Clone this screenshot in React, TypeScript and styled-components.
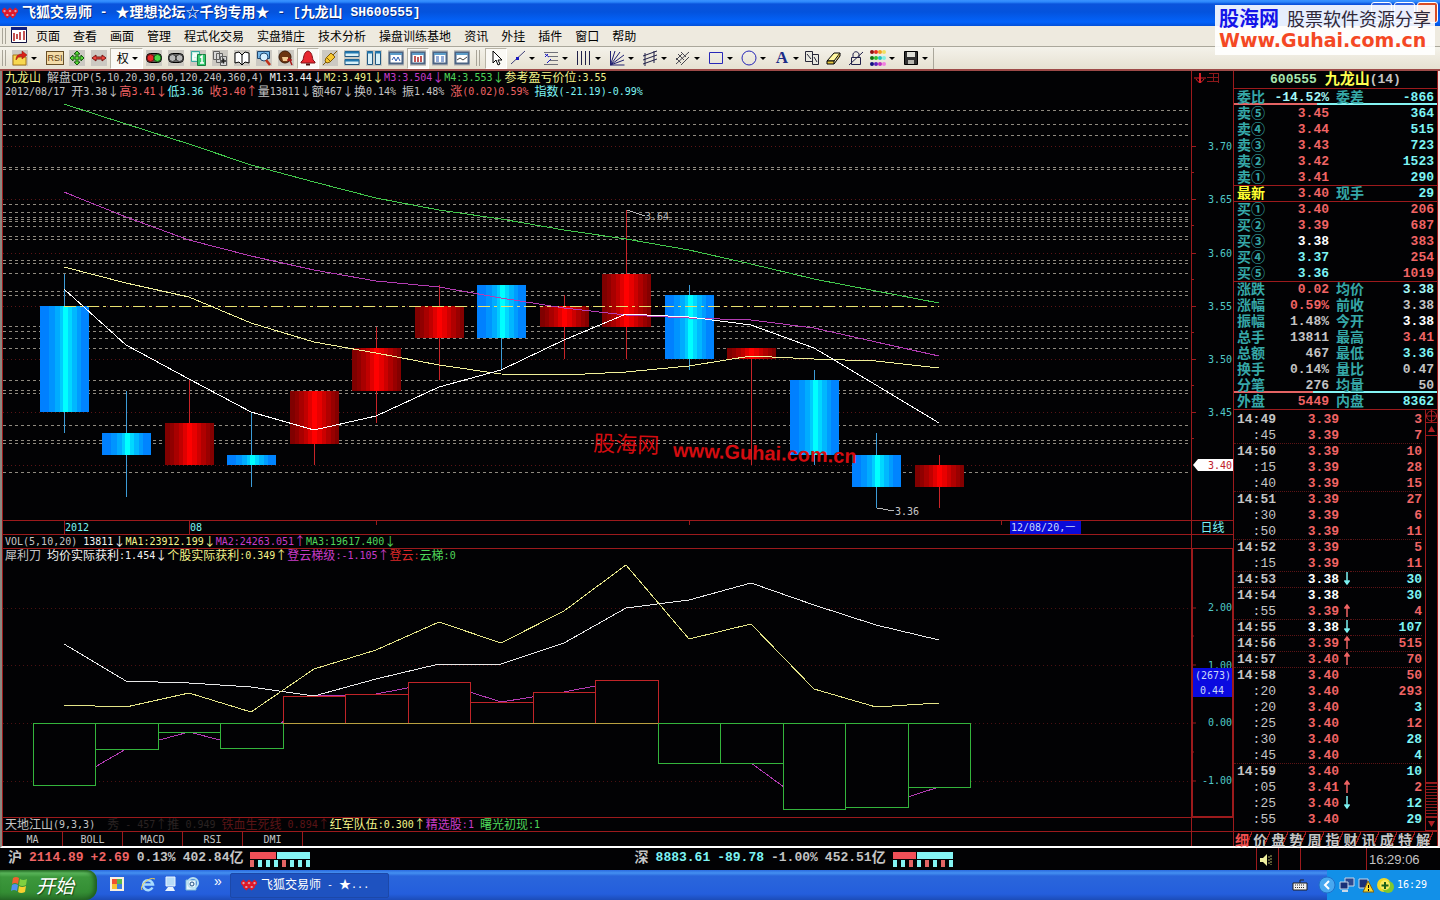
import React from 'react';
import styled, { createGlobalStyle, css } from 'styled-components';

const CJK = '"Noto Sans CJK SC", sans-serif';
const MONO = `"DejaVu Sans Mono", ${CJK}`;
const NUM = `"Liberation Mono", ${CJK}`;
const RED = '#9c1a1c';
const C = {
  up: '#f06464', down: '#7df4f4', flat: '#ffffff', gray: '#c4c4c4', label: '#36a8a8',
  yellow: '#f4f48a', magenta: '#c83cc8', green: '#4fd65a', white: '#f4f4f4',
};

const GlobalStyle = createGlobalStyle`
  * { box-sizing: border-box; }
  body { margin: 0; background: #020204; }
  button { font: inherit; color: inherit; background: none; border: 0; padding: 0; margin: 0; }
`;

/* ---------- text with half-width latin and full-width Chinese ---------- */
const Wide = styled.span<{ $size: number }>`
  font-family: ${CJK};
  font-size: ${p => p.$size}px;
  line-height: 0;
  vertical-align: -1px;
`;
const WIDE_RE = /([\u3400-\u9fff\u2460-\u2473\u2605\u2606\u2190-\u2193]+)/;
const Mixed = ({ children, size = 12 }: { children: string; size?: number }) => (
  <>
    {children.split(WIDE_RE).map((part, i) =>
      i % 2 ? <Wide key={i} $size={size}>{part}</Wide> : part)}
  </>
);

/* ---------- page frame ---------- */
const Page = styled.div`
  min-height: 100vh;
  display: flex;
  flex-direction: column;
  position: relative;
  font: 10px/14px ${MONO};
  color: ${C.gray};
`;

const TitleBar = styled.header`
  height: 26px;
  display: flex;
  align-items: center;
  gap: 4px;
  padding-left: 2px;
  background: linear-gradient(#3a93ff 0, #2b86fb 2px, #0a53dc 4px, #0453dd 12px, #0363fb 22px, #0350d8 26px);
  color: #fff;
`;
const Title = styled.h1`
  margin: 0;
  font: bold 13px/22px ${NUM};
  white-space: pre;
  text-shadow: 1px 1px 0 #0a2c80;
`;

const Menu = styled.nav`
  height: 21px;
  display: flex;
  align-items: center;
  gap: 13px;
  padding-left: 36px;
  position: relative;
  background: #eeeadf;
  border-bottom: 1px solid #aaa79b;
  color: #000;
  font: 12px/18px ${CJK};
`;
const MenuIcon = styled.span`
  position: absolute;
  left: 0;
  top: 1px;
  display: flex;
  align-items: center;
`;

const Toolbar = styled.div`
  height: 24px;
  display: flex;
  align-items: center;
  background: linear-gradient(#f4f2ea, #e6e1d2);
  border-bottom: 2px solid #9d4a48;
  color: #000;
`;
const Grip = styled.span<{ $group?: boolean }>`
  width: 4px;
  height: 16px;
  flex: none;
  border-left: 1px solid #a8a498;
  border-right: 1px solid #a8a498;
  margin: 0 ${p => (p.$group ? 5 : 3)}px 0 ${p => (p.$group ? 3 : 2)}px;
`;
const Tool = styled.button<{ $drop?: boolean; $active?: boolean; $tile?: boolean; $wide?: boolean; $narrow?: boolean }>`
  width: ${p => (p.$wide ? 35 : p.$narrow ? 30 : p.$drop ? 33 : 22)}px;
  height: 21px;
  flex: none;
  display: flex;
  align-items: center;
  justify-content: ${p => (p.$drop ? 'flex-start' : 'center')};
  gap: 3px;
  padding-left: ${p => (p.$drop ? 3 : 0)}px;
  font: 12px/18px ${CJK};
  svg { flex: none; }
  ${p => p.$active && css`
    background: #faf9f5;
    border: 1px solid #b8b4a6;
    border-right-color: #fff;
    border-bottom-color: #fff;
  `}
  ${p => p.$tile && css`
    svg { background: #ccc9c2; }
  `}
`;
const Caret = styled.i`
  border: 3px solid transparent;
  border-top-color: #000;
  border-bottom: 0;
`;
const ToolEnd = styled.span`
  height: 21px;
  border-left: 1px solid #aaa79b;
`;

/* ---------- workspace ---------- */
const Workspace = styled.main`
  flex: 1;
  display: grid;
  grid-template-columns: minmax(0, 1fr) 42px 205px;
  border-left: 2px solid #8c8880;
  border-right: 2px solid #f4dcdc;
  border-bottom: 2px solid #fff;
  background: #020204;
`;
const Rows = styled.div`
  display: grid;
  grid-template-rows: 449px 14px 14px 269px 14px 15px;
  border-left: 1px solid ${RED};
  min-width: 0;
  > * + * { border-top: 1px solid ${RED}; }
`;
const Pane = styled.section`
  display: flex;
  flex-direction: column;
  min-width: 0;
  min-height: 0;
`;
const Canvas = styled.svg`
  display: block;
  width: 100%;
  flex: 1;
  min-height: 0;
  overflow: hidden;
`;
const Info = styled.div`
  height: 14px;
  line-height: 13px;
  padding-left: 2px;
  white-space: pre;
`;
const Ink = styled.span<{ $c: string }>`
  color: ${p => p.$c};
`;
const ChartText = styled.text`
  font: 10px ${MONO};
`;
const Watermark = styled.text<{ $cn?: boolean }>`
  font: ${p => (p.$cn ? '22px' : 'bold 20px')} "Liberation Sans", "Noto Sans CJK SC", sans-serif;
  fill: #d40c10;
`;
const StudyTabs = styled.div`
  display: flex;
  button {
    width: 60px;
    border-right: 1px solid ${RED};
    line-height: 13px;
  }
`;
const AxisName = styled.div`
  color: ${C.down};
  text-align: center;
  line-height: 13px;
`;
const AxisFrame = styled.div`
  display: flex;
  outline: 1px solid ${RED};
  outline-offset: -1px;
`;

type Seg = [string, string];
const InfoLine = ({ segs }: { segs: Seg[] }) => (
  <Info>{segs.map(([t, c], i) => <Ink key={i} $c={c}><Mixed>{t}</Mixed></Ink>)}</Info>
);

/* ---------- chart data ---------- */
const PLOT_X = 3, PLOT_Y = 99, SUB_Y = 563;
const X = Array.from({ length: 15 }, (_, i) => Math.floor(64 + i * 62.5));
const priceY = (p: number) => Math.round(465.4 - (p - 3.4) * 1064);

// open, high, low, close
const CANDLES = [
  [3.55, 3.58, 3.43, 3.45], [3.43, 3.47, 3.37, 3.41], [3.4, 3.48, 3.4, 3.44], [3.41, 3.45, 3.38, 3.4],
  [3.42, 3.47, 3.4, 3.47], [3.47, 3.53, 3.44, 3.51], [3.52, 3.57, 3.48, 3.55], [3.57, 3.57, 3.49, 3.52],
  [3.53, 3.56, 3.5, 3.55], [3.53, 3.64, 3.5, 3.58], [3.56, 3.57, 3.49, 3.5], [3.5, 3.51, 3.4, 3.51],
  [3.48, 3.49, 3.4, 3.41], [3.41, 3.43, 3.36, 3.38], [3.38, 3.41, 3.36, 3.4],
];
const LEVELS = [110, 124, 135, 167, 169, 204, 212, 217, 219, 221, 226, 236, 239, 260, 263, 273, 291, 295,
  326, 331, 338, 348, 380, 390, 393, 425, 440, 443, 472];
const MA: [string, number[]][] = [
  ['#42c84c', [104, 124, 144, 165, 182, 198, 210, 219, 230, 239, 250, 264, 279, 291, 303]],
  ['#b43cb4', [192, 217, 240, 256, 270, 281, 287, 298, 308, 315, 318, 320, 328, 342, 356]],
  ['#f0f09a', [267, 283, 297, 323, 342, 353, 365, 374, 375, 372, 366, 356, 359, 361, 368]],
  ['#ffffff', [289, 345, 379, 412, 430, 416, 387, 370, 340, 314, 317, 325, 348, 385, 423]],
];
const BARS = [785, 749, 732, 748, 696, 694, 682, 702, 692, 680, 763, 763, 809, 807, 787];
const PROFIT_AVG = [644, 681, 683, 687, 696, 679, 664, 664, 643, 608, 600, 583, 605, 625, 640];
const PROFIT_ONE = [705, 707, 693, 712, 669, 650, 622, 643, 611, 565, 639, 624, 689, 707, 703];
const points = (ys: number[]) => ys.map((y, i) => `${X[i]},${y}`).join(' ');

const Stops = ({ list }: { list: [number, string][] }) => (
  <>
    {list.map(([o, c], i) => (
      <React.Fragment key={i}>
        <stop offset={`${o}%`} stopColor={c} />
        <stop offset={`${list[i + 1] ? list[i + 1][0] : 100}%`} stopColor={c} />
      </React.Fragment>
    ))}
  </>
);

const PriceChart = () => (
  <Canvas role="img" aria-label="日线">
    <defs>
      <linearGradient id="fall">
        <Stops list={[[0, '#0080ff'], [18, '#0094ff'], [31, '#00acff'], [41, '#00ccff'], [46, '#00ffff'], [58, '#00d8ff'], [65, '#00b8ff'], [76, '#009cff'], [84, '#0084ff']]} />
      </linearGradient>
      <linearGradient id="rise">
        <Stops list={[[0, '#800000'], [10, '#900000'], [19, '#a80000'], [28, '#c00000'], [37, '#e00000'], [44, '#ff0000'], [56, '#e80000'], [65, '#cc0000'], [74, '#b00000'], [83, '#980000'], [91, '#840000']]} />
      </linearGradient>
    </defs>
    <g transform={`translate(${-PLOT_X} ${-PLOT_Y})`} shapeRendering="crispEdges">
      {[3.7, 3.65, 3.6, 3.55, 3.5, 3.45, 3.4].map(p => (
        <line key={p} x1="3" x2="100%" y1={priceY(p) + .5} y2={priceY(p) + .5} stroke="#5a1416" strokeDasharray="1 3" />
      ))}
      {LEVELS.map(y => (
        <line key={y} x1="3" x2="100%" y1={y + .5} y2={y + .5} stroke="#8f8a80" strokeDasharray="3 3" />
      ))}
      {CANDLES.map(([o, h, l, c], i) => {
        const up = c > o;
        const top = priceY(Math.max(o, c));
        return (
          <g key={i}>
            <rect x={X[i]} y={priceY(h)} width="1" height={priceY(l) - priceY(h)} fill={up ? '#c82428' : '#3c9cd8'} />
            <rect x={X[i] - 24} y={top} width="49" height={priceY(Math.min(o, c)) - top} fill={up ? 'url(#rise)' : 'url(#fall)'} />
          </g>
        );
      })}
      <line x1="64" x2="939" y1="306.5" y2="306.5" stroke="#e8e070" strokeDasharray="12 4 3 4" />
      {MA.map(([c, ys]) => <polyline key={c} points={points(ys)} fill="none" stroke={c} />)}
      <path d="M627 210l18 6M877 508l17 3" stroke="#b8b8b8" fill="none" />
      <ChartText x="645" y="220" fill="#b8b8b8">3.64</ChartText>
      <ChartText x="895" y="515" fill="#c8c8c8">3.36</ChartText>
      <g transform="rotate(2 593 450)">
        <Watermark $cn x="593" y="451">股海网</Watermark>
        <Watermark x="673" y="454">www.Guhai.com.cn</Watermark>
      </g>
    </g>
  </Canvas>
);

const ProfitChart = () => (
  <Canvas role="img" aria-label="犀利刀">
    <g transform={`translate(${-PLOT_X} ${-SUB_Y})`} shapeRendering="crispEdges">
      {[608, 665, 723, 781].map(y => (
        <line key={y} x1="3" x2="100%" y1={y + .5} y2={y + .5} stroke="#4a1012" strokeDasharray="1 3" />
      ))}
      <polyline points={points(BARS)} fill="none" stroke="#b43cb4" />
      {BARS.map((y, i) => {
        const up = y < 723;
        return (
          <rect key={i} x={X[i] - 31 + .5} y={Math.min(y, 723) + .5} width={(X[i + 1] ?? 1001) - X[i]} height={Math.abs(y - 723)}
            fill="#020204" stroke={up ? '#c02428' : '#34b43c'} />
        );
      })}
      <line x1="283" x2="658" y1="723.5" y2="723.5" stroke="#b8a040" />
      <polyline points={points(PROFIT_AVG)} fill="none" stroke="#e8e8e8" />
      <polyline points={points(PROFIT_ONE)} fill="none" stroke="#e4e488" />
    </g>
  </Canvas>
);

const DateScale = () => (
  <Canvas>
    <path d="M61.5 0v14M186.5 0v14M373.5 0v4M686.5 0v4M998.5 0v4" stroke={RED} />
    <ChartText x="62" y="10" fill={C.down}>2012</ChartText>
    <ChartText x="187" y="10" fill={C.down}>08</ChartText>
    <rect x="1007" y="0" width="71" height="14" fill="#0a0ad8" />
    <ChartText x="1008" y="10" fill="#c8d8f8">12/08/20,一</ChartText>
  </Canvas>
);

const PriceAxis = () => (
  <Canvas>
    <path d="M2 7h12M7.5 2v10M8.5 2v10M4 8q4 7 8 0" stroke="#d82028" fill="none" />
    <path d="M15 6.5h12M21.5 2v9M26.5 2v10M17 2.5h10M15 10.5h12" stroke="#8c181a" fill="none" />
    {[3.7, 3.65, 3.6, 3.55, 3.5, 3.45].map(p => (
      <g key={p}>
        <path d={`M0 ${priceY(p) - 70.5}h4M0 ${priceY(p) - 44.5}h2`} stroke={RED} />
        <ChartText x="40" y={priceY(p) - 67} textAnchor="end" fill="#50c8c8">{p.toFixed(2)}</ChartText>
      </g>
    ))}
    <path d="M1 394l5-6h35v12h-35z" fill="#fff" />
    <ChartText x="40" y="398" textAnchor="end" fill="#c02028">3.40</ChartText>
  </Canvas>
);

const ProfitAxis = () => (
  <Canvas>
    <path d="M0 59h4M0 87h2M0 116h4M0 145h2M0 174h4M0 203h2M0 232h4" stroke={RED} />
    {([['2.00', 62], ['1.00', 120], ['0.00', 177], ['-1.00', 235]] as [string, number][]).map(([t, y]) => (
      <ChartText key={t} x="40" y={y} textAnchor="end" fill="#50c8c8">{t}</ChartText>
    ))}
    <rect x="0" y="119" width="41" height="29" fill="#0a0ae0" />
    <ChartText x="3" y="130" fill="#c8d8f8">(2673)</ChartText>
    <ChartText x="8" y="145" fill="#c8d8f8">0.44</ChartText>
  </Canvas>
);

/* ---------- quote panel ---------- */
const Panel = styled.aside`
  display: flex;
  flex-direction: column;
  border: solid ${RED};
  border-width: 0 1px;
  font: bold 13px/15px ${NUM};
`;
const PanelHead = styled.h2`
  margin: 0;
  height: 18px;
  font: bold 13px/17px ${NUM};
  text-align: center;
  border-bottom: 1px solid ${RED};
  white-space: pre;
`;
const Table = styled.table`
  border-spacing: 0;
  table-layout: fixed;
  width: 100%;
  td, th { padding: 0; height: 16px; line-height: 15px; text-align: right; font-weight: bold; white-space: nowrap; }
`;
const QuoteRow = styled.tr<{ $line?: boolean; $bar?: number }>`
  ${p => p.$line && css`td, th { border-top: 1px solid ${RED}; }`}
  ${p => p.$bar && css`
    background: linear-gradient(90deg, #e46464 ${p.$bar}%, #84f4f4 ${p.$bar}%) 0 100% / 100% 2px no-repeat;
  `}
  th { text-align: left; padding-left: 3px; color: ${C.label}; }
  td + th { padding-left: 7px; }
  td:last-child { padding-right: 3px; }
`;
const TickRow = styled.tr<{ $minute?: boolean }>`
  th { color: ${C.gray}; font-weight: ${p => (p.$minute ? 'bold' : 'normal')}; }
  ${p => p.$minute && css`&:not(:first-child) > * { border-top: 1px dotted #5c1416; }`}
`;
const TickArea = styled.div`
  flex: 1;
  display: grid;
  grid-template-columns: 1fr 12px;
  column-gap: 3px;
  border-top: 1px solid ${RED};
`;
const Ticks = styled.div`
  padding-top: 1px;
`;
const Scroll = styled.div`
  display: flex;
  flex-direction: column;
  border-left: 1px solid ${RED};
`;
const ScrollButton = styled.button`
  height: 13px;
  display: flex;
  align-items: center;
  justify-content: center;
  border-bottom: 1px solid ${RED};
`;
const ScrollThumb = styled.div`
  height: 36px;
  margin-top: auto;
  border-top: 1px solid ${RED};
  border-bottom: 1px solid ${RED};
  background: repeating-linear-gradient(#8c181a 0 1px, #020204 1px 3px);
`;
const PanelTabs = styled.div`
  height: 15px;
  display: flex;
  border-top: 1px solid ${RED};
  padding-right: 4px;
  button {
    flex: 1;
    padding-right: 2px;
    font: bold 14px/13px ${CJK};
    color: ${C.gray};
    background: linear-gradient(to bottom right, transparent 44%, ${RED} 44% 56%, transparent 56%) 100% 0 / 6px 100% no-repeat;
  }
  button:first-child { color: #f05050; }
`;

type Q = { a: string; b: string; bc: string; c?: string; d: string; dc: string; line?: boolean; bar?: number; ac?: string };
const { up: U, down: D, flat: F, gray: G } = C;
const QUOTES: Q[] = [
  { a: '委比', b: '-14.52%', bc: '#a4f8f8', c: '委差', d: '-866', dc: D, bar: 41 },
  { a: '卖⑤', b: '3.45', bc: U, d: '364', dc: D },
  { a: '卖④', b: '3.44', bc: U, d: '515', dc: D },
  { a: '卖③', b: '3.43', bc: U, d: '723', dc: D },
  { a: '卖②', b: '3.42', bc: U, d: '1523', dc: D },
  { a: '卖①', b: '3.41', bc: U, d: '290', dc: D },
  { a: '最新', ac: '#ffff30', b: '3.40', bc: U, c: '现手', d: '29', dc: D, line: true },
  { a: '买①', b: '3.40', bc: U, d: '206', dc: U, line: true },
  { a: '买②', b: '3.39', bc: U, d: '687', dc: U },
  { a: '买③', b: '3.38', bc: F, d: '383', dc: U },
  { a: '买④', b: '3.37', bc: D, d: '254', dc: U },
  { a: '买⑤', b: '3.36', bc: D, d: '1019', dc: U },
  { a: '涨跌', b: '0.02', bc: U, c: '均价', d: '3.38', dc: '#a4f8f8', line: true },
  { a: '涨幅', b: '0.59%', bc: U, c: '前收', d: '3.38', dc: G },
  { a: '振幅', b: '1.48%', bc: G, c: '今开', d: '3.38', dc: F },
  { a: '总手', b: '13811', bc: G, c: '最高', d: '3.41', dc: U },
  { a: '总额', b: '467', bc: G, c: '最低', d: '3.36', dc: D },
  { a: '换手', b: '0.14%', bc: G, c: '量比', d: '0.47', dc: G },
  { a: '分笔', b: '276', bc: G, c: '均量', d: '50', dc: G, bar: 39 },
  { a: '外盘', b: '5449', bc: U, c: '内盘', d: '8362', dc: D },
];
// time, price, volume, price colour, volume colour, direction
const TICKS: [string, string, string, string, string, number][] = [
  ['14:49', '3.39', '3', U, U, 0], [':45', '3.39', '7', U, U, 0], ['14:50', '3.39', '10', U, U, 0],
  [':15', '3.39', '28', U, U, 0], [':40', '3.39', '15', U, U, 0], ['14:51', '3.39', '27', U, U, 0],
  [':30', '3.39', '6', U, U, 0], [':50', '3.39', '11', U, U, 0], ['14:52', '3.39', '5', U, U, 0],
  [':15', '3.39', '11', U, U, 0], ['14:53', '3.38', '30', F, D, -1], ['14:54', '3.38', '30', F, D, 0],
  [':55', '3.39', '4', U, U, 1], ['14:55', '3.38', '107', F, D, -1], ['14:56', '3.39', '515', U, U, 1],
  ['14:57', '3.40', '70', U, U, 1], ['14:58', '3.40', '50', U, U, 0], [':20', '3.40', '293', U, U, 0],
  [':20', '3.40', '3', U, D, 0], [':25', '3.40', '12', U, U, 0], [':30', '3.40', '28', U, D, 0],
  [':45', '3.40', '4', U, D, 0], ['14:59', '3.40', '10', U, D, 0], [':05', '3.41', '2', U, U, 1],
  [':25', '3.40', '12', U, D, -1], [':55', '3.40', '29', U, D, 0],
];

const ArrowSvg = styled.svg`
  display: inline-block;
  vertical-align: top;
`;
const Arrow = ({ dir }: { dir: number }) => (
  <ArrowSvg width="8" height="13" role="img" aria-label={dir > 0 ? '升' : '降'}>
    {dir > 0
      ? <path d="M4 13V3M1.5 4.5L4 1l2.5 3.5" stroke={U} strokeWidth="1.5" fill={U} />
      : <path d="M4 0v10M1.5 8.5L4 12l2.5-3.5" stroke={D} strokeWidth="1.5" fill={D} />}
  </ArrowSvg>
);

const QuotePanel = () => (
  <Panel>
    <PanelHead>
      <Ink $c="#a8e8b0">600555</Ink> <Ink $c="#ffff50"><Mixed size={15}>九龙山</Mixed></Ink>(14)
    </PanelHead>
    <Table>
      <colgroup><col width="34" /><col width="61" /><col width="40" /><col /></colgroup>
      <tbody>
        {QUOTES.map((q, i) => (
          <QuoteRow key={i} $line={q.line} $bar={q.bar}>
            <th scope="row"><Ink $c={q.ac ?? C.label}><Mixed size={14}>{q.a}</Mixed></Ink></th>
            <td><Ink $c={q.bc}>{q.b}</Ink></td>
            <th scope="row"><Mixed size={14}>{q.c ?? ''}</Mixed></th>
            <td><Ink $c={q.dc}>{q.d}</Ink></td>
          </QuoteRow>
        ))}
      </tbody>
    </Table>
    <TickArea>
      <Ticks>
        <Table>
          <colgroup><col width="42" /><col width="63" /><col width="12" /><col /></colgroup>
          <tbody>
            {TICKS.map(([t, p, v, pc, vc, dir], i) => (
              <TickRow key={i} $minute={t.length > 3}>
                <th scope="row">{t}</th>
                <td><Ink $c={pc}>{p}</Ink></td>
                <td>{dir !== 0 && <Arrow dir={dir} />}</td>
                <td><Ink $c={vc}>{v}</Ink></td>
              </TickRow>
            ))}
          </tbody>
        </Table>
      </Ticks>
      <Scroll>
        <ScrollButton aria-label="定位">
          <svg width="11" height="12"><path d="M5.5 0v12M0 6h11" stroke="#b02024" /><circle cx="5.5" cy="6" r="5" fill="none" stroke="#b02024" /></svg>
        </ScrollButton>
        <ScrollButton aria-label="上"><svg width="7" height="6"><path d="M3.5 0L7 6H0z" fill="#b02024" /></svg></ScrollButton>
        <ScrollThumb />
        <ScrollButton aria-label="下"><svg width="7" height="6"><path d="M0 0h7L3.5 6z" fill="#b02024" /></svg></ScrollButton>
      </Scroll>
    </TickArea>
    <PanelTabs>{[...'细价盘势周指财讯成特解'].map(t => <button key={t}>{t}</button>)}</PanelTabs>
  </Panel>
);

/* ---------- icons ---------- */
const Ico = ({ children, w = 16 }: { children: React.ReactNode; w?: number }) => (
  <svg width={w} height="16" viewBox={`0 0 ${w} 16`} fill="none" stroke="#000" aria-hidden="true">{children}</svg>
);
const FoxIcon = () => (
  <svg width="16" height="14" viewBox="0 0 16 14" fill="none" stroke="#e01828" aria-hidden="true">
    <path d="M0 5l2.5-2.5L5 5 2.5 7.5zM5.5 5L8 2.5 10.5 5 8 7.5zM11 5l2.5-2.5L16 5l-2.5 2.5zM2.8 9l2.5-2.5L7.8 9l-2.5 2.5zM8.2 9l2.5-2.5L13.2 9l-2.5 2.5z" fill="#d8a0b0" strokeWidth="1.5" />
  </svg>
);
const Win = ({ children }: { children: React.ReactNode }) => (
  <Ico><path d="M1.5 2.5h13v11h-13z" fill="#fff" stroke="#4c6484" strokeWidth="2" /><path d="M2 4h12" stroke="#5c9cc8" strokeWidth="2" />{children}</Ico>
);
const ICONS: Record<string, React.ReactNode> = {
  open: <Ico><path d="M1 5h5l1 2h7v8H1z" fill="#f8d850" stroke="#a87818" /><path d="M4 10c0-5 3-6 6-6V1l5 4-5 4V6.5C7 6.5 6 7 4 10z" fill="#d82018" stroke="#901008" strokeWidth=".5" /></Ico>,
  plus: <Ico><path d="M8 1l3 3H9v3h3V5l3 3-3 3V9H9v3h2l-3 3-3-3h2V9H4v2L1 8l3-3v2h3V4H5z" fill="#58d838" stroke="#185810" /></Ico>,
  span: <Ico><path d="M1 8l4-3v2h6V5l4 3-4 3V9H5v2z" fill="#f04840" stroke="#781410" /></Ico>,
  lights: <Ico><rect x=".5" y="3.5" width="15" height="9" rx="4" fill="#585050" /><circle cx="4.5" cy="8" r="3.5" fill="#e82828" stroke="#701010" /><circle cx="11.5" cy="8" r="3.5" fill="#48d848" stroke="#106010" /></Ico>,
  lightsOff: <Ico><rect x=".5" y="3.5" width="15" height="9" rx="4" fill="#686868" /><circle cx="4.5" cy="8" r="3.5" fill="#b8b8b8" stroke="#383838" /><circle cx="11.5" cy="8" r="3.5" fill="#b8b8b8" stroke="#383838" /></Ico>,
  cards: <Ico><path d="M1.5 1.5h8v10h-8z" fill="#c8f0e0" stroke="#38a8a0" /><path d="M7.5 4.5h8v11h-8z" fill="#38c870" stroke="#188040" /><path d="M10 7.5l2-1.5v7M10 13h4M3 4h3v2H3v3h3" stroke="#fff" strokeWidth="1.5" /></Ico>,
  stack: <Ico><path d="M1.5 1.5h6v8h-6zM4.5 3.5h6v9h-6zM8.5 6.5h6v9h-6z" fill="#d8d8d8" stroke="#606060" /><path d="M9 11h5M11.5 8.5v5" stroke="#202020" strokeWidth="1.5" /></Ico>,
  book: <Ico><path d="M1 3l4-1 3 3 3-3 4 1v10l-4-1-3 3-3-3-4 1zM8 5v10" fill="#fff" /></Ico>,
  find: <Ico><path d="M1.5 1.5h12v7h-12z" fill="#78b8e8" stroke="#204870" /><circle cx="8" cy="7" r="4" fill="#d8f0ff" stroke="#204870" /><path d="M10 10l4 5" stroke="#c03018" strokeWidth="2.5" /></Ico>,
  mascot: <Ico><circle cx="7" cy="7" r="6" fill="#6c3410" stroke="#3c1c08" /><path d="M4 7h6v4H5z" fill="#f0c890" stroke="none" /><path d="M9 10h5M11 8l3 7" stroke="#a81818" strokeWidth="1.5" /></Ico>,
  bell: <Ico><path d="M8 1c4 1 4 5 5 9l2 2v1H1v-1l2-2c1-4 1-8 5-9z" fill="#e82830" stroke="#801018" /><path d="M6 14.5h4" stroke="#501010" strokeWidth="2" /></Ico>,
  plug: <Ico><path d="M4 8l5-5 4 4-5 5-3 1-2-2z" fill="#f8c830" stroke="#805c08" /><path d="M11 5l4-4M1 15l3-3M5 8l4 4" stroke="#805c08" /></Ico>,
  rows: <Ico><path d="M1 1.5h14v5H1zM1 9.5h14v5H1z" fill="#d8f0f8" stroke="#205880" /><path d="M1 2.5h14M1 10.5h14" stroke="#2078b0" strokeWidth="2" /></Ico>,
  cols: <Ico><path d="M1.5 1.5h5v13h-5zM9.5 1.5h5v13h-5z" fill="#d8f0f8" stroke="#205880" /><path d="M1 2.5h6M9 2.5h6" stroke="#2078b0" strokeWidth="2" /></Ico>,
  winWave: <Win><path d="M4 10l2-3 2 4 2-4 2 4" stroke="#2858b0" /></Win>,
  winCandle: <Win><path d="M5 6v6M8 7v5M11 6v6" stroke="#b02020" strokeWidth="1.5" /></Win>,
  winList: <Win><path d="M4 7h3M4 9h3M4 11h3M9 7h3M9 9h3M9 11h3" stroke="#2858b0" /></Win>,
  winLine: <Win><path d="M3 10l3-2 3 2 4-3" stroke="#404040" /></Win>,
  cursor: <Ico><path d="M5 1v12l3-3 2 5 2-1-2-4h4z" fill="#fff" /></Ico>,
  line: <Ico><path d="M1 14L15 1" stroke="#404078" /><path d="M6 7h3v3H6z" fill="#1818c0" stroke="none" /></Ico>,
  fib: <Ico><path d="M1 2.5h14M6 6.5h9M6 10.5h9M1 14.5h14" stroke="#707078" /><path d="M2 4l4 3M2 7l3-3M4 13l4-4" stroke="#1818c0" /></Ico>,
  vlines: <Ico><path d="M1.5 1v14M5.5 1v14M9.5 1v14M13.5 1v14" stroke="#202048" /></Ico>,
  fan: <Ico><path d="M1.5 1v14h14M1.5 15L6 1M1.5 15L11 2M1.5 15L15 5M1.5 15L15 10" stroke="#202070" /></Ico>,
  channel: <Ico><path d="M1 6l14-5M1 10l14-5M1 14l14-5M3 3v13M12 1v12" stroke="#202048" /></Ico>,
  fork: <Ico><path d="M3 4l6 6M6 2l5 5M1 8l5 5M1 14L14 2M6 15l8-8M1 10L8 3" stroke="#484850" /></Ico>,
  rect: <Ico><path d="M1.5 2.5h13v11h-13z" stroke="#2828b8" /></Ico>,
  circle: <Ico><circle cx="8" cy="8" r="7" stroke="#2828b8" /></Ico>,
  copy: <Ico><path d="M1.5 1.5h7v10h-7zM8.5 4.5h6v10h-6z" fill="#e8e8e0" stroke="#282838" /><path d="M3 4l4 5M10 7l3 5" stroke="#282838" /></Ico>,
  eraser: <Ico><path d="M1 11l7-8h6l-6 8z" fill="#fff8a0" /><path d="M1 11v3h7v-3zM8 14l6-8V3" fill="#e8c840" /></Ico>,
  lock: <Ico><path d="M3.5 7.5h9v7h-9zM5 7V4c1-3 5-3 6 0v3M1 15L15 2" stroke="#202048" /></Ico>,
  save: <Ico><path d="M1.5 1.5h13v13h-13z" fill="#303030" /><path d="M4 2h8v5H4z" fill="#e0e0d8" stroke="none" /><path d="M5 10h6v4H5z" fill="#b8b8b0" stroke="none" /></Ico>,
};
const DotsIcon = () => (
  <Ico>
    {[['#901010', '#e83020', '#f0a020', '#f0e060'], ['#107010', '#30c030', '#20c0c0', '#80f0e0'], ['#101080', '#6020c0', '#c030c0', '#f080e0']].map((r, y) =>
      r.map((c, x) => <circle key={c} cx={2 + x * 4} cy={2 + y * 6} r="2" fill={c} stroke="none" />))}
  </Ico>
);
const Rsi = styled.span`
  font: 9px/12px "Liberation Sans", sans-serif;
  border: 1px solid #685028;
  background: #f4dca8;
  color: #604010;
`;
const LetterA = styled.span`
  width: 16px;
  font: bold 17px/18px "Liberation Serif", serif;
  color: #1c2c88;
  text-align: center;
`;

const Logo = styled.a`
  position: absolute;
  right: 5px;
  top: 5px;
  width: 220px;
  height: 50px;
  padding: 0 4px;
  background: rgba(255, 255, 255, .9);
  text-decoration: none;
  white-space: nowrap;
  font: bold 20px/26px ${CJK};
  color: #1414e8;
`;
const LogoTag = styled.span`
  margin-left: 8px;
  font: 18px/26px ${CJK};
  color: #302838;
`;
const LogoUrl = styled.span`
  display: block;
  font: bold 19px/19px "DejaVu Sans", sans-serif;
  color: #f44824;
`;
const WinButtons = styled.div`
  position: absolute;
  right: 2px;
  top: 2px;
  display: flex;
  gap: 2px;
`;
const WinButton = styled.button<{ $close?: boolean }>`
  width: 21px;
  height: 21px;
  border: 1px solid #fff;
  border-radius: 3px;
  background: ${p => (p.$close ? '#d84c24' : '#2c62e4')};
`;

/* ---------- index strip and task bar ---------- */
const IndexStrip = styled.footer`
  height: 22px;
  display: grid;
  grid-template-columns: 44% 1fr auto;
  background: #020204;
  font: bold 13px/19px ${NUM};
`;
const IndexItem = styled.div`
  display: flex;
  align-items: flex-start;
  padding-left: 8px;
  gap: 7px;
  white-space: nowrap;
  & + & { padding-left: 1px; }
`;
const Meter = styled.svg`
  margin-top: 4px;
`;
const StripCells = styled.div`
  display: grid;
  grid-template-columns: 22px 22px 66px 74px;
  > * { border-left: 1px solid ${RED}; padding-left: 2px; }
`;
const SoundCell = styled.span`
  display: flex;
  align-items: center;
`;
const Clock = styled.time`
  font: 13px/24px "Liberation Sans", sans-serif;
`;

const TaskBar = styled.footer`
  height: 30px;
  display: flex;
  align-items: center;
  background: linear-gradient(#2a6ae0 0, #4490f0 3px, #2a66dc 6px, #245edc 24px, #1c4cb8 30px);
  color: #fff;
`;
const Start = styled.button`
  align-self: stretch;
  width: 97px;
  display: flex;
  align-items: center;
  gap: 7px;
  padding-left: 10px;
  border-radius: 0 10px 12px 0;
  background: linear-gradient(#2f7c2f 0, #5cb85c 3px, #3c983c 7px, #348e34 22px, #286e28 30px);
  box-shadow: inset -3px 0 4px #1e5c20;
  font: italic 19px/26px ${CJK};
  color: #fff;
  text-shadow: 1px 1px 1px #184818;
`;
const Quick = styled.div`
  width: 133px;
  display: flex;
  align-items: center;
  gap: 6px;
  padding-left: 12px;
  button:first-child { margin-right: 9px; }
  button { width: 16px; height: 18px; }
`;
const QuickMore = styled.span`
  padding-left: 8px;
  font: 14px/14px "Liberation Sans", sans-serif;
  margin-bottom: 9px;
`;
const TaskButton = styled.button`
  width: 159px;
  height: 25px;
  display: flex;
  align-items: center;
  gap: 4px;
  padding-left: 10px;
  border-radius: 2px;
  border: 1px solid #1c48a8;
  background: #1e52c0;
  font: 10px/18px ${MONO};
  white-space: pre;
`;
const Keyboard = styled.span`
  margin-left: auto;
  margin-right: 10px;
  display: flex;
`;
const Tray = styled.div`
  align-self: stretch;
  width: 122px;
  display: flex;
  align-items: center;
  gap: 3px;
  background: linear-gradient(90deg, transparent 9px, #1290e8 9px);
  white-space: nowrap;
`;

const IndexQuote = ({ name, value, delta, pct, vol, tone, split, ticks }: {
  name: string; value: string; delta: string; pct: string; vol: string; tone: string; split: number; ticks: string;
}) => (
  <IndexItem>
    <span><Mixed size={14}>{name}</Mixed></span>
    <Ink $c={tone}>{value}</Ink>
    <Ink $c={tone}>{delta}</Ink>
    <span>{pct}</span>
    <span><Mixed size={14}>{vol}</Mixed></span>
    <Meter width="60" height="15" shapeRendering="crispEdges" aria-hidden="true">
      <rect width={split} height="7" fill="#f05058" />
      <rect x={split + 1} width={59 - split} height="7" fill="#84f4f4" />
      {[...ticks].map((t, i) => <rect key={i} x={i * 8} y="8" width="4" height="7" fill={t === 'r' ? '#e46464' : '#84f4f4'} />)}
    </Meter>
  </IndexItem>
);

const MENU = ['页面', '查看', '画面', '管理', '程式化交易', '实盘猎庄', '技术分析', '操盘训练基地', '资讯', '外挂', '插件', '窗口', '帮助'];

export default function App() {
  const g = C.gray;
  return (
    <Page>
      <GlobalStyle />
      <TitleBar>
        <FoxIcon />
        <Title><Mixed size={14}>{'飞狐交易师 - ★理想论坛☆千钧专用★ - [九龙山 SH600555]'}</Mixed></Title>
        <WinButtons>
          <WinButton aria-label="最小化" /><WinButton aria-label="还原" /><WinButton $close aria-label="关闭" />
        </WinButtons>
      </TitleBar>
      <Menu>
        <MenuIcon>
          <Grip />
          <svg width="18" height="17" viewBox="0 0 18 17" aria-hidden="true">
            <path d="M2.5.5h15v15h-15z" fill="#fff" stroke="#101040" /><path d="M2 1.5h16" stroke="#102080" strokeWidth="3" />
            <path d="M5 6v8M8 7v5M11 5v8M15 4v9" stroke="#b01818" strokeWidth="1.5" />
          </svg>
        </MenuIcon>
        {MENU.map(m => <button key={m}>{m}</button>)}
      </Menu>
      <Toolbar>
        <Grip />
        <Tool $drop $wide $tile aria-label="打开">{ICONS.open}<Caret /></Tool>
        <Tool aria-label="RSI"><Rsi>RSI</Rsi></Tool>
        {['plus', 'span'].map(n => <Tool key={n} $tile aria-label={n}>{ICONS[n]}</Tool>)}
        <Tool $drop $active>&nbsp;权<Caret /></Tool>
        {['lights', 'lightsOff', 'cards', 'stack', 'book', 'find', 'mascot', 'bell', 'plug', 'rows', 'cols', 'winWave', 'winCandle', 'winList', 'winLine'].map(n => (
          <Tool key={n} $tile={n !== 'bell'} $active={n === 'bell' || n === 'winCandle'} aria-label={n}>{ICONS[n]}</Tool>
        ))}
        <Grip $group />
        <Tool $active aria-label="cursor">{ICONS.cursor}</Tool>
        {['line', 'fib', 'vlines', 'fan', 'channel', 'fork', 'rect', 'circle'].map(n => (
          <Tool key={n} $drop aria-label={n}>{ICONS[n]}<Caret /></Tool>
        ))}
        <Tool $drop $narrow><LetterA>A</LetterA><Caret /></Tool>
        {['copy', 'eraser', 'lock'].map(n => <Tool key={n} aria-label={n}>{ICONS[n]}</Tool>)}
        <Tool $drop aria-label="colours"><DotsIcon /><Caret /></Tool>
        <Tool $drop aria-label="save">{ICONS.save}<Caret /></Tool>
        <ToolEnd />
      </Toolbar>

      <Workspace>
        <Rows>
          <Pane>
            <InfoLine segs={[['九龙山', C.yellow], [' 解盘CDP(5,10,20,30,60,120,240,360,4) ', g], ['M1:3.44↓', C.white], ['M2:3.491↓', C.yellow], ['M3:3.504↓', C.magenta], ['M4:3.553↓', C.green], ['参考盈亏价位:3.55', C.yellow]]} />
            <InfoLine segs={[['2012/08/17 开3.38↓', g], ['高3.41↓', U], ['低3.36 ', D], ['收3.40↑', U], ['量13811↓额467↓换0.14% 振1.48% ', g], ['涨(0.02)0.59% ', U], ['指数(-21.19)-0.99%', D]]} />
            <PriceChart />
          </Pane>
          <Pane><DateScale /></Pane>
          <InfoLine segs={[['VOL(5,10,20) ', g], ['13811↓', C.white], ['MA1:23912.199↓', C.yellow], ['MA2:24263.051↑', C.magenta], ['MA3:19617.400↓', C.green]]} />
          <Pane>
            <InfoLine segs={[['犀利刀 ', g], ['均价实际获利:1.454↓', C.white], ['个股实际获利:0.349↑', C.yellow], ['登云梯级:-1.105↑', C.magenta], ['登云:', '#d82828'], ['云梯:0', C.green]]} />
            <ProfitChart />
          </Pane>
          <InfoLine segs={[['天地江山(9,3,3) ', g], [' 秀 - 457↑推 0.949 ', '#2a2222'], ['铁血生死线 0.894↑', '#5a1416'], ['红军队伍:0.300↑', C.yellow], ['精选股:1 ', C.magenta], ['曙光初现:1', C.green]]} />
          <StudyTabs>{['MA', 'BOLL', 'MACD', 'RSI', 'DMI'].map(t => <button key={t}>{t}</button>)}</StudyTabs>
        </Rows>
        <Rows>
          <Pane><PriceAxis /></Pane>
          <AxisName><Mixed>日线</Mixed></AxisName>
          <div />
          <AxisFrame><ProfitAxis /></AxisFrame>
          <div />
          <div />
        </Rows>
        <QuotePanel />
      </Workspace>

      <IndexStrip>
        <IndexQuote name="沪" value="2114.89" delta="+2.69" pct="0.13%" vol="402.84亿" tone={U} split={26} ticks="rcccrccc" />
        <IndexQuote name="深" value="8883.61" delta="-89.78" pct="-1.00%" vol="452.51亿" tone={D} split={23} ticks="ccrcrcrc" />
        <StripCells>
          <SoundCell>
            <svg width="16" height="16" viewBox="0 0 16 16" aria-hidden="true"><path d="M1 6h3l4-4v12l-4-4H1z" fill="#f0f0a0" /><path d="M10 4v8M12 3v10" stroke="#b0b060" strokeDasharray="2 1" /></svg>
          </SoundCell>
          <span /><span />
          <Clock>16:29:06</Clock>
        </StripCells>
      </IndexStrip>

      <TaskBar>
        <Start>
          <svg width="19" height="18" viewBox="0 0 19 18" aria-hidden="true">
            <path d="M3 2q3-2 6 0L8 8Q5 6 2 8z" fill="#f06030" /><path d="M10 3q3 2 7 0l-1 6q-4 2-7 0z" fill="#80d040" />
            <path d="M2 9q3-2 6 0l-1 6q-3-2-6 0z" fill="#5090f0" /><path d="M9 10q3 2 7 0l-1 6q-4 2-7 0z" fill="#f8d030" />
          </svg>
          开始
        </Start>
        <Quick>
          <button aria-label="图片">
            <svg width="16" height="16"><path d="M1 1h14v14H1z" fill="#f8f0e0" /><path d="M3 3h5v5H3z" fill="#f05030" /><path d="M8 3h5v5H8z" fill="#58b848" /><path d="M3 8h5v5H3z" fill="#f8c030" /><path d="M8 8h5v5H8z" fill="#4080e0" /></svg>
          </button>
          <button aria-label="浏览器">
            <svg width="16" height="17"><path d="M12.5 11.5A5 5 0 1 1 13 8.5H4" fill="none" stroke="#a8dcff" strokeWidth="2.5" /><path d="M2 14C-1 10 9 0 15 3" fill="none" stroke="#f0d050" /></svg>
          </button>
          <button aria-label="桌面">
            <svg width="16" height="16"><path d="M4 1h9v9H4z" fill="#b8dcf8" stroke="#e8f4ff" /><path d="M3 15l3-4h5l2 4z" fill="#e8f4ff" /></svg>
          </button>
          <button aria-label="邮件">
            <svg width="16" height="16"><path d="M2 4h10v10H2z" fill="#e8f4ff" stroke="#78b8d8" /><circle cx="9" cy="7" r="5" fill="none" stroke="#b8e0f0" strokeWidth="2" /><circle cx="8" cy="8" r="2" fill="none" stroke="#205080" /></svg>
          </button>
          <QuickMore>»</QuickMore>
        </Quick>
        <TaskButton><FoxIcon /><span><Mixed>飞狐交易师 - ★...</Mixed></span></TaskButton>
        <Keyboard>
          <svg width="16" height="12" aria-hidden="true"><path d="M1 4h14v7H1z" fill="#f0f0f0" stroke="#202020" /><path d="M3 6h10M3 8.5h10" stroke="#303030" strokeDasharray="1 1" /><path d="M8 4V1h4" stroke="#202020" fill="none" /></svg>
        </Keyboard>
        <Tray>
          <svg width="18" height="18" aria-hidden="true"><circle cx="9" cy="9" r="8" fill="#48a8f0" stroke="#2070c8" /><path d="M11 5L7 9l4 4" fill="none" stroke="#fff" strokeWidth="2" /></svg>
          <svg width="16" height="16" aria-hidden="true"><path d="M6 1h9v8H6z" fill="#2c4890" stroke="#c8d8e8" /><path d="M1 5h8v7H1z" fill="#183078" stroke="#c8d8e8" /><path d="M3 14h6" stroke="#c8d8e8" strokeWidth="2" /></svg>
          <svg width="16" height="16" aria-hidden="true"><path d="M1 2h9v9H1z" fill="#183078" stroke="#c8d8e8" /><path d="M10 4l6 11H5z" fill="#f8d830" stroke="#806010" /><path d="M10.5 8v3M10.5 12v2" stroke="#000" /></svg>
          <svg width="17" height="17" aria-hidden="true"><circle cx="7" cy="8" r="7" fill="#f0d828" /><circle cx="11" cy="10" r="6" fill="#80c830" /><circle cx="8" cy="8" r="5" fill="#f8ec60" /><path d="M8 5v7M4.5 8.5h7" stroke="#186018" strokeWidth="2" /></svg>
          <time>16:29</time>
        </Tray>
      </TaskBar>

      <Logo href="#guhai">
        股海网<LogoTag>股票软件资源分享</LogoTag>
        <LogoUrl>Www.Guhai.com.cn</LogoUrl>
      </Logo>
    </Page>
  );
}
